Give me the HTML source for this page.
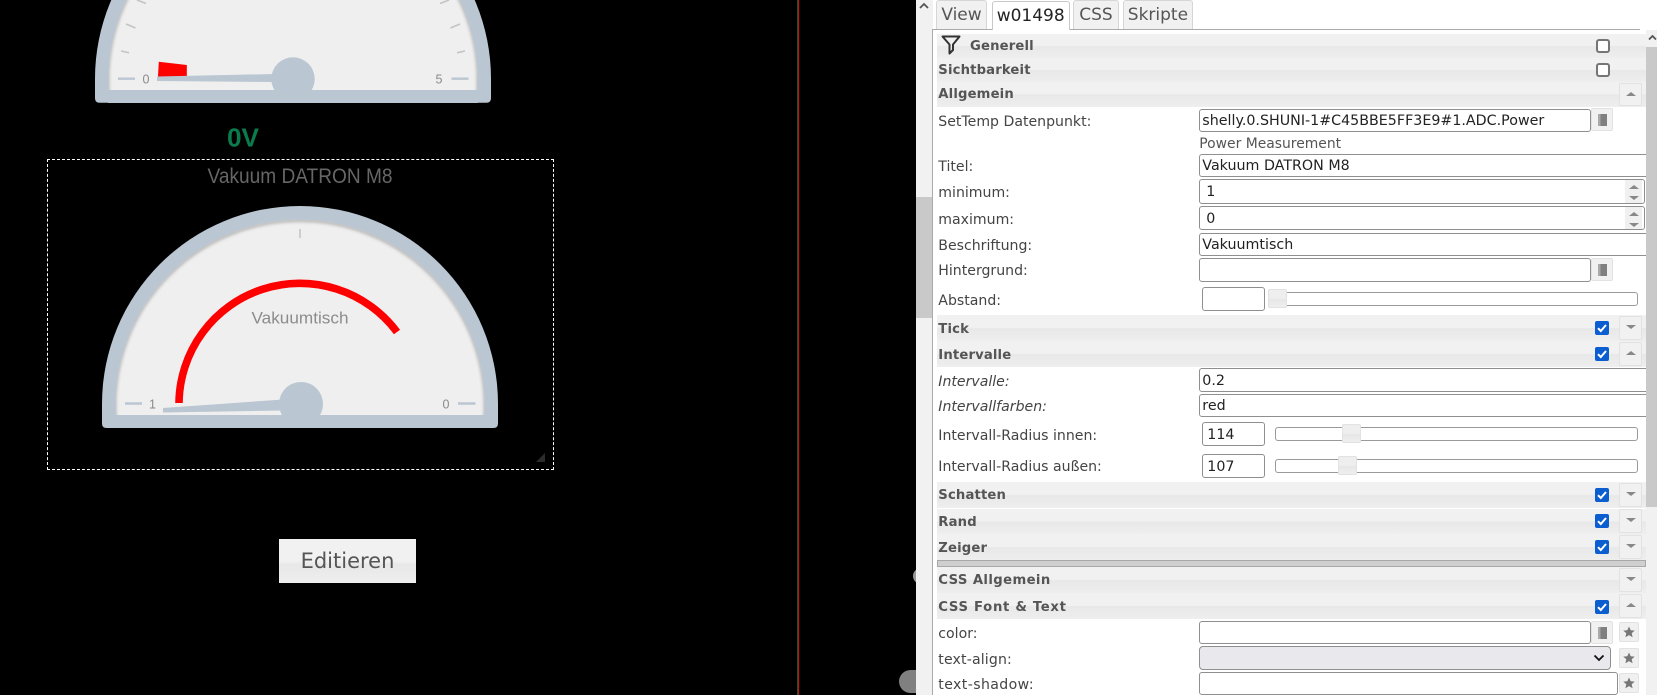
<!DOCTYPE html>
<html><head><meta charset="utf-8"><title>Vis</title>
<style>
html,body{margin:0;padding:0;width:1657px;height:695px;overflow:hidden;background:#000}
*{box-sizing:border-box}
#side{position:absolute;left:916px;top:0;width:741px;height:695px;background:#fff;overflow:hidden;font-family:"DejaVu Sans",Verdana,sans-serif;font-size:14.1px;color:#444}
#side>*{position:absolute}
.h{left:21px;width:709px;background:linear-gradient(#f1f1f1 0,#f1f1f1 48%,#e8e8e8 52%,#eeeeee 100%)}
.ht{left:22.3px;height:20px;line-height:20px;font-weight:bold;font-size:13.2px;letter-spacing:.15px;color:#555;white-space:nowrap}
.l{left:22.3px;height:20px;line-height:20px;white-space:nowrap;color:#444}
.i{background:#fff;border:1px solid #8f8f8f;border-radius:3px;padding-left:2px;color:#222;font-size:14.25px;line-height:22.5px;white-space:nowrap;overflow:hidden}
.t{top:0;height:29px;background:#f1f1f1;border:1px solid #d6d6d6;border-bottom:0;border-radius:3px 3px 0 0;text-align:center;font-size:17px;line-height:29px;color:#555}
.b{width:23px;height:23.5px;background:#f1f1f1;border:1px solid #e2e2e2;border-radius:2px}
.u:after,.d:after{content:"";position:absolute;left:6px;top:8px;border-left:5px solid transparent;border-right:5px solid transparent}
.u:after{border-bottom:4px solid #888}
.d:after{border-top:4px solid #888}
.c{width:14px;height:14px;background:#0b5ed0;border-radius:2px}
.c svg{position:absolute;left:0;top:0}
.e{width:14px;height:14px;background:#fff;border:2px solid #767676;border-radius:3px}
.tr{background:#fff;border:1px solid #9a9a9a;border-radius:3px}
.hd{background:linear-gradient(#eeeeee 0,#eeeeee 50%,#e6e6e6 55%,#efefef 100%);border:1px solid #e2e2e2;border-radius:2px}
.bk{width:22.7px;height:23px;background:#f1f1f1;border:1px solid #e2e2e2;border-radius:2px}
.bk:after{content:"";position:absolute;left:6.5px;top:5px;width:9px;height:12px;background:linear-gradient(90deg,#aaa 0,#aaa 25%,#808080 25%,#808080 100%)}
.st{left:703.3px;width:20px;height:20px;background:#f0f0f0;border:1px solid #e2e2e2;border-radius:2px}
.st svg{position:absolute;left:2px;top:2px}
</style></head>
<body>
<svg width="1657" height="695" viewBox="0 0 1657 695" style="position:absolute;left:0;top:0">
<defs>
<filter id="bl" x="-10%" y="-10%" width="120%" height="120%"><feGaussianBlur stdDeviation="1.6"/></filter>
<clipPath id="c1"><path d="M108.5 78.7A184.5 184.5 0 0 1 477.5 78.7V90H108.5Z"/></clipPath>
<clipPath id="c2"><path d="M115.5 404A184.5 184.5 0 0 1 484.5 404V415H115.5Z"/></clipPath>
</defs>
<!-- top gauge -->
<path d="M95 78.7A198 198 0 0 1 491 78.7V98.2Q491 102.7 486.5 102.7H99.5Q95 102.7 95 98.2Z" fill="#bac6d2"/>
<path d="M108.5 78.7A184.5 184.5 0 0 1 477.5 78.7V90H108.5Z" fill="#efefef"/>
<g clip-path="url(#c1)"><circle cx="293" cy="80.5" r="185.5" fill="none" stroke="#8a8a8a" stroke-width="3" filter="url(#bl)" opacity=".65"/></g>
<path d="M118 78.7H135M451.5 78.7H468.5" stroke="#bac6d2" stroke-width="2.4"/>
<path d="M121 51L129 52.8M126 24L135.5 28M137 0L146 3.5M465 51L457 52.8M460 24L450.5 28M449 0L440 3.5" stroke="#c4c4c4" stroke-width="1.6"/>
<polygon points="158.8,61.7 186.8,65 186.8,76.5 158,76.5" fill="#f00"/>
<polygon points="157,76.5 157,81 275,82 275,74" fill="#bac6d2"/>
<circle cx="293" cy="79" r="21.7" fill="#bac6d2"/>
<rect x="108" y="90" width="370" height="13" fill="#bac6d2"/>
<text x="146" y="83.5" text-anchor="middle" font-family="Liberation Sans" font-size="12.5" fill="#8a8a8a">0</text>
<text x="439" y="83.5" text-anchor="middle" font-family="Liberation Sans" font-size="12.5" fill="#8a8a8a">5</text>
<!-- 0V -->
<text x="227" y="146.5" font-family="Liberation Sans" font-weight="bold" font-size="26" fill="#0b7a4c" textLength="32" lengthAdjust="spacingAndGlyphs">0V</text>
<!-- title -->
<text x="207.5" y="183" font-family="Liberation Sans" font-size="21" fill="#666" textLength="185" lengthAdjust="spacingAndGlyphs">Vakuum DATRON M8</text>
<!-- main gauge -->
<path d="M102 404A198 198 0 0 1 498 404V423.5Q498 428 493.5 428H106.5Q102 428 102 423.5Z" fill="#bac6d2"/>
<path d="M115.5 404A184.5 184.5 0 0 1 484.5 404V415H115.5Z" fill="#efefef"/>
<g clip-path="url(#c2)"><circle cx="300" cy="405.8" r="185.5" fill="none" stroke="#8a8a8a" stroke-width="3" filter="url(#bl)" opacity=".65"/></g>
<path d="M125 403.5H142M458 403.5H475.5" stroke="#bac6d2" stroke-width="2.4"/>
<path d="M300 229V238" stroke="#c4c4c4" stroke-width="1.6"/>
<path d="M179 403A121 121 0 0 1 397 332" fill="none" stroke="#f00" stroke-width="7.6"/>
<text x="300" y="323.5" text-anchor="middle" font-family="Liberation Sans" font-size="16.5" fill="#8c8c8c" textLength="97" lengthAdjust="spacingAndGlyphs">Vakuumtisch</text>
<polygon points="163,408 163,412.5 283,410.5 283,399.5" fill="#bac6d2"/>
<circle cx="301" cy="404" r="22" fill="#bac6d2"/>
<rect x="115" y="415" width="370" height="13" fill="#bac6d2"/>
<text x="152.5" y="408.5" text-anchor="middle" font-family="Liberation Sans" font-size="12.5" fill="#8a8a8a">1</text>
<text x="446" y="408.5" text-anchor="middle" font-family="Liberation Sans" font-size="12.5" fill="#8a8a8a">0</text>
<polygon points="545,453 545,462 536,462" fill="#2c2c2c"/>
<!-- vertical lines -->
<rect x="797" y="0" width="1" height="695" fill="#2f4a24"/>
<rect x="798" y="0" width="1.2" height="695" fill="#a81c12"/>
<!-- blobs -->
<ellipse cx="921" cy="576" rx="8" ry="8" fill="#999"/>
<rect x="899" y="670" width="30" height="23" rx="11.5" fill="#808080"/>
</svg>
<div style="position:absolute;left:47px;top:159px;width:507px;height:311px;border:1px dashed #fff"></div>
<div style="position:absolute;left:279px;top:539px;width:137px;height:44px;background:linear-gradient(#f1f1f1 0,#f1f1f1 50%,#e8e8e8 58%,#eeeeee 100%);color:#555;font-family:'DejaVu Sans',sans-serif;font-size:21px;line-height:44px;text-align:center">Editieren</div>

<div id="side">
<!-- left scrollbar -->
<div style="left:0;top:0;width:16.5px;height:695px;background:#f1f1f1"></div>
<div style="left:0;top:197px;width:16.5px;height:121px;background:#c9c9c9"></div>
<svg style="left:3px;top:2px" width="10" height="7"><path d="M1 6L5 2L9 6" fill="none" stroke="#555" stroke-width="1.8"/></svg>
<div style="left:16.3px;top:29px;width:1.2px;height:666px;background:#aaa"></div>
<div style="left:16.3px;top:29px;width:708px;height:1.2px;background:#aaa"></div>
<!-- tabs -->
<div class="t" style="left:20px;width:51px">View</div>
<div class="t" style="left:75.7px;width:78px;background:#fff;color:#222;top:1px;height:29px;border-color:#c8c8c8">w01498</div>
<div class="t" style="left:157px;width:46px">CSS</div>
<div class="t" style="left:206.7px;width:70.5px">Skripte</div>

<!-- Headers -->
<div class="h" style="top:34px;height:24px"></div>
<div class="h" style="top:58px;height:24px"></div>
<div class="h" style="top:82px;height:24.7px"></div>
<svg style="left:24.5px;top:34.5px" width="20" height="20"><path d="M1.5 1.5H18.5L12 9.5V15L8.5 18.5V9.5Z" fill="none" stroke="#333" stroke-width="2" stroke-linejoin="round"/></svg>
<div class="ht" style="left:54px;top:37px">Generell</div>
<div class="ht" style="top:61px">Sichtbarkeit</div>
<div class="ht" style="top:85px">Allgemein</div>
<div class="e" style="left:679.7px;top:38.7px"></div>
<div class="e" style="left:679.7px;top:63px"></div>
<div class="b u" style="left:703.3px;top:82.5px"></div>

<!-- Allgemein rows -->
<div class="l" style="top:112px">SetTemp Datenpunkt:</div>
<div class="i" style="left:283.3px;top:109px;width:391.5px;height:23px">shelly.0.SHUNI-1#C45BBE5FF3E9#1.ADC.Power</div>
<div class="bk" style="left:674.7px;top:108px"></div>
<div class="l" style="left:283.3px;top:133.5px;color:#555;font-size:13.9px">Power Measurement</div>
<div class="l" style="top:156.7px">Titel:</div>
<div class="i" style="left:283.3px;top:154px;width:470px;height:23px">Vakuum DATRON M8</div>
<div class="l" style="top:183.3px">minimum:</div>
<div class="i" style="left:283.3px;top:179px;width:445.5px;height:25px;padding-left:6px;line-height:24px">1</div>
<div class="l" style="top:210.3px">maximum:</div>
<div class="i" style="left:283.3px;top:206px;width:445.5px;height:24px;padding-left:6px;line-height:24px">0</div>
<div style="left:709px;top:180px;width:17px;height:23px;background:#f0f0f0"></div>
<div style="left:709px;top:207px;width:17px;height:22px;background:#f0f0f0"></div>
<div class="u" style="left:707px;top:177px;width:22px;height:10px"></div>
<div class="d" style="left:707px;top:188px;width:22px;height:10px"></div>
<div class="u" style="left:707px;top:204px;width:22px;height:10px"></div>
<div class="d" style="left:707px;top:214.5px;width:22px;height:10px"></div>
<div class="l" style="top:236px">Beschriftung:</div>
<div class="i" style="left:283.3px;top:233px;width:470px;height:23px">Vakuumtisch</div>
<div class="l" style="top:261px">Hintergrund:</div>
<div class="i" style="left:283.3px;top:258px;width:391.5px;height:24px"></div>
<div class="bk" style="left:674.7px;top:258px"></div>
<div class="l" style="top:291px">Abstand:</div>
<div class="i" style="left:286.3px;top:287px;width:62.5px;height:24px"></div>
<div class="tr" style="left:359px;top:292px;width:362.5px;height:13.5px"></div>
<div class="hd" style="left:352.3px;top:289px;width:18.5px;height:18.5px"></div>

<!-- Tick / Intervalle -->
<div class="h" style="top:315px;height:26px"></div>
<div class="h" style="top:341px;height:26px"></div>
<div class="ht" style="top:320px">Tick</div>
<div class="ht" style="top:346px">Intervalle</div>
<div class="c" style="left:679px;top:321.2px"><svg width="14" height="14"><path d="M3 7.2L5.8 10L11 4" fill="none" stroke="#fff" stroke-width="2"/></svg></div>
<div class="c" style="left:679px;top:347.2px"><svg width="14" height="14"><path d="M3 7.2L5.8 10L11 4" fill="none" stroke="#fff" stroke-width="2"/></svg></div>
<div class="b d" style="left:703.3px;top:316px"></div>
<div class="b u" style="left:703.3px;top:342.3px"></div>
<div class="l" style="top:372px;font-style:italic">Intervalle:</div>
<div class="i" style="left:283.3px;top:368.3px;width:470px;height:24px;line-height:24px">0.2</div>
<div class="l" style="top:397px;font-style:italic">Intervallfarben:</div>
<div class="i" style="left:283.3px;top:394.3px;width:470px;height:23px">red</div>
<div class="l" style="top:426px">Intervall-Radius innen:</div>
<div class="i" style="left:286.3px;top:422.3px;width:62.5px;height:24px;padding-left:4px;line-height:24px">114</div>
<div class="tr" style="left:359.3px;top:427.3px;width:362.8px;height:13.5px"></div>
<div class="hd" style="left:426.3px;top:424.3px;width:18.7px;height:18.5px"></div>
<div class="l" style="top:456.5px">Intervall-Radius außen:</div>
<div class="i" style="left:286.3px;top:454px;width:62.5px;height:24px;padding-left:4px;line-height:24px">107</div>
<div class="tr" style="left:359.3px;top:459.3px;width:362.8px;height:13.5px"></div>
<div class="hd" style="left:422.3px;top:456px;width:18.5px;height:18.7px"></div>

<!-- Schatten / Rand / Zeiger -->
<div class="h" style="top:482.3px;height:26.2px"></div>
<div class="h" style="top:508.5px;height:25.5px"></div>
<div class="h" style="top:534px;height:26px"></div>
<div class="ht" style="top:486px">Schatten</div>
<div class="ht" style="top:512.7px">Rand</div>
<div class="ht" style="top:539.3px">Zeiger</div>
<div class="c" style="left:679px;top:488px"><svg width="14" height="14"><path d="M3 7.2L5.8 10L11 4" fill="none" stroke="#fff" stroke-width="2"/></svg></div>
<div class="c" style="left:679px;top:514px"><svg width="14" height="14"><path d="M3 7.2L5.8 10L11 4" fill="none" stroke="#fff" stroke-width="2"/></svg></div>
<div class="c" style="left:679px;top:540.4px"><svg width="14" height="14"><path d="M3 7.2L5.8 10L11 4" fill="none" stroke="#fff" stroke-width="2"/></svg></div>
<div class="b d" style="left:703.3px;top:483.3px"></div>
<div class="b d" style="left:703.3px;top:509.3px"></div>
<div class="b d" style="left:703.3px;top:535px"></div>
<div style="left:21.3px;top:560px;width:708.5px;height:7px;background:#cfcfcf;border:1px solid #a8a8a8"></div>

<!-- CSS -->
<div class="h" style="top:567px;height:25.5px"></div>
<div class="h" style="top:592.5px;height:26px"></div>
<div class="ht" style="top:571px;letter-spacing:.4px">CSS Allgemein</div>
<div class="ht" style="top:597.7px;letter-spacing:.7px">CSS Font &amp; Text</div>
<div class="c" style="left:679px;top:599.7px"><svg width="14" height="14"><path d="M3 7.2L5.8 10L11 4" fill="none" stroke="#fff" stroke-width="2"/></svg></div>
<div class="b d" style="left:703.3px;top:568.3px"></div>
<div class="b u" style="left:703.3px;top:594.3px"></div>

<div class="l" style="top:624.3px">color:</div>
<div class="i" style="left:283.3px;top:621px;width:391.5px;height:23px"></div>
<div class="bk" style="left:674.7px;top:620.5px"></div>
<div class="st" style="top:622.3px"><svg width="14" height="14" viewBox="0 0 14 14"><path d="M7 1.5L8.7 5.2L12.7 5.6L9.7 8.2L10.6 12.2L7 10.1L3.4 12.2L4.3 8.2L1.3 5.6L5.3 5.2Z" fill="#777"/></svg></div>
<div class="l" style="top:650px;letter-spacing:.15px">text-align:</div>
<div style="left:283.3px;top:646.3px;width:411.4px;height:23.4px;background:#e9e9ed;border:1px solid #8f8f8f;border-radius:4px"></div>
<svg style="left:677px;top:654px" width="12" height="8"><path d="M1.5 1.5L6 6L10.5 1.5" fill="none" stroke="#111" stroke-width="1.8"/></svg>
<div class="st" style="top:648.3px"><svg width="14" height="14" viewBox="0 0 14 14"><path d="M7 1.5L8.7 5.2L12.7 5.6L9.7 8.2L10.6 12.2L7 10.1L3.4 12.2L4.3 8.2L1.3 5.6L5.3 5.2Z" fill="#777"/></svg></div>
<div class="l" style="top:675px;letter-spacing:.4px">text-shadow:</div>
<div class="i" style="left:283.3px;top:672.3px;width:419px;height:23px"></div>
<div class="st" style="top:673.3px"><svg width="14" height="14" viewBox="0 0 14 14"><path d="M7 1.5L8.7 5.2L12.7 5.6L9.7 8.2L10.6 12.2L7 10.1L3.4 12.2L4.3 8.2L1.3 5.6L5.3 5.2Z" fill="#777"/></svg></div>

<!-- right scrollbar -->
<div style="left:730px;top:30px;width:11px;height:665px;background:#f1f1f1"></div>
<div style="left:730px;top:47px;width:11px;height:460px;background:#c9c9c9"></div>
<svg style="left:732px;top:34px" width="9" height="7"><path d="M1 5.5L4.5 2L8 5.5" fill="none" stroke="#555" stroke-width="1.8"/></svg>
</div>
</body></html>
